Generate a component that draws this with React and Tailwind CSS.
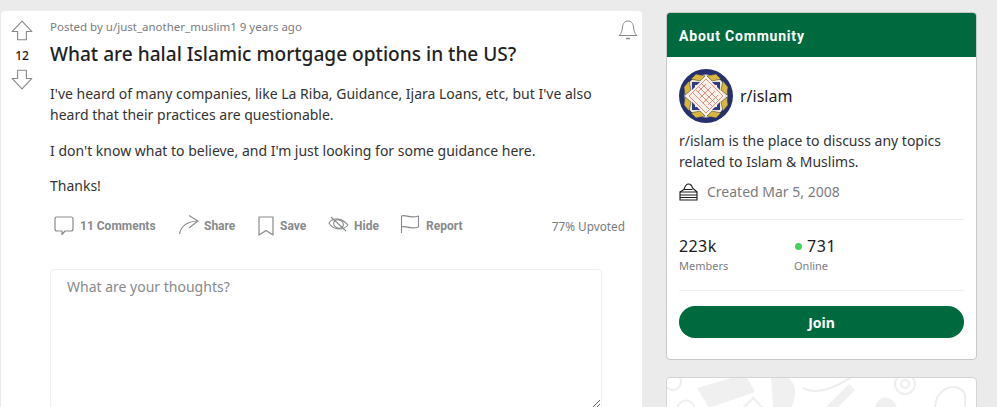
import React from 'react';

const plex = "font-['Roboto',sans-serif]";
const noto = "font-['Noto_Sans',sans-serif]";

const Arrow = ({ down }) => (
  <svg width="22" height="22" viewBox="0 0 20 20" fill="none" stroke="#878a8c" strokeWidth="1" className={down ? 'rotate-180' : ''}>
    <path d="M10 1 L19 10.5 H14 V18 H6 V10.5 H1 Z" strokeLinejoin="round" />
  </svg>
);

const actions = [
  {
    label: '11 Comments',
    gap: 'gap-[6px]',
    w: 'w-[124px]',
    icon: (
      <svg width="20" height="20" viewBox="0 0 20 20" fill="none" stroke="#878a8c" strokeWidth="1.2">
        <path d="M3 1 H17 Q19 1 19 3 V13 Q19 15 17 15 H11 L8 18.5 V15 H3 Q1 15 1 13 V3 Q1 1 3 1 Z" strokeLinejoin="round" />
      </svg>
    ),
  },
  {
    label: 'Share',
    gap: 'gap-[5px]',
    w: 'w-[80px]',
    icon: (
      <svg width="21" height="21" viewBox="0 0 21 21" fill="none" stroke="#878a8c" strokeWidth="1.1">
        <path d="M1.5 19 C3 11 10 6.5 19.5 6" />
        <path d="M11 0.5 L20 6 L11 13" />
      </svg>
    ),
  },
  {
    label: 'Save',
    gap: 'gap-[6px]',
    w: 'w-[70px]',
    icon: (
      <svg width="16" height="20" viewBox="0 0 16 20" fill="none" stroke="#878a8c" strokeWidth="1.2">
        <path d="M1 1 H15 V19 L8 14.5 L1 19 Z" strokeLinejoin="round" />
      </svg>
    ),
  },
  {
    label: 'Hide',
    gap: 'gap-[5px]',
    w: 'w-[72px]',
    icon: (
      <svg width="21" height="16" viewBox="0 0 21 16" fill="none" stroke="#878a8c" strokeWidth="1.1" className="-mt-[3px]">
        <path d="M1 7 C5 1 14 2 20 9 C15 15 5 14 1 7 Z" />
        <ellipse cx="10.5" cy="8" rx="5" ry="4" transform="rotate(20 10.5 8)" />
        <path d="M3 1 L18 15" />
      </svg>
    ),
  },
  {
    label: 'Report',
    gap: 'gap-[6px]',
    w: '',
    icon: (
      <svg width="20" height="20" viewBox="0 0 20 20" fill="none" stroke="#878a8c" strokeWidth="1.1" className="-mt-[3px]">
        <path d="M1.5 19 V2 C6 0 9 5 18.5 2 V13 C10 16 6 11 1.5 13" strokeLinejoin="round" />
      </svg>
    ),
  },
];

const Logo = () => (
  <svg width="54" height="54" viewBox="0 0 54 54" className="shrink-0">
    <circle cx="27" cy="27" r="27" fill="#27306f" />
    <circle cx="27" cy="27" r="21.5" fill="#efe9cf" />
    <rect x="13" y="13" width="28" height="28" fill="#2d3a86" />
    <rect x="16" y="16" width="22" height="22" fill="#e8ebf5" />
    <path d="M17 5 L26 7 L21 12 L12 10 Z M37 5 L28 7 L33 12 L42 10 Z M17 49 L26 47 L21 42 L12 44 Z M37 49 L28 47 L33 42 L42 44 Z" fill="#d8b740" stroke="#333" strokeWidth="0.5" />
    <path d="M5 18 L10 12 L12 21 L6 26 Z M49 18 L44 12 L42 21 L48 26 Z M5 36 L10 42 L12 33 L6 28 Z M49 36 L44 42 L42 33 L48 28 Z" fill="#d8b740" stroke="#333" strokeWidth="0.5" />
    <path d="M27 7 L47 27 L27 47 L7 27 Z" fill="#fbf1ea" />
    <g stroke="#cf7a66" strokeWidth="0.8" fill="none">
      <path d="M27 10 L44 27 L27 44 L10 27 Z" />
      <path d="M23 15 L39 31 M20 18 L36 34 M17 21 L33 37 M14 24 L30 40" />
      <path d="M27 15 L19 23 M32 18 L21 29 M36 22 L24 34 M39 26 L29 36" />
    </g>
  </svg>
);

const Doodles = () => (
  <svg width="309" height="30" viewBox="0 0 309 30" fill="none" className="block">
    <g fill="#f0f0f0">
      <path d="M30 10 L78 -4 L88 14 L42 30 Z" />
      <path d="M104 -2 H120 Q134 10 124 30 H106 Z" />
      <path d="M158 30 L182 6 L188 12 L170 30 Z" />
      <path d="M208 30 C210 16 226 16 230 30 Z" />
    </g>
    <g stroke="#eeeeee" strokeWidth="2">
      <circle cx="238" cy="6" r="10" />
      <circle cx="238" cy="6" r="4" />
      <path d="M268 30 C268 10 290 2 298 16 V30" />
      <circle cx="6" cy="4" r="8" />
      <path d="M136 10 C150 18 168 10 186 -2" />
      <path d="M76 30 L86 20 L96 30" />
      <path d="M10 30 C14 20 24 20 28 30" />
    </g>
  </svg>
);

export default function App() {
  return (
    <div className={`h-[407px] w-[997px] overflow-hidden bg-[#ebebeb] pt-[11px] flex items-start ${noto}`}>
      {/* Post */}
      <div className="ml-px h-[396px] w-[641px] shrink-0 rounded-t bg-white flex">
        <div className="w-[40px] shrink-0 pt-[9px] pl-[10px] flex flex-col items-start">
          <Arrow />
          <div className="w-[22px] mt-[6px] mb-[4px] text-center text-[12px] leading-[16px] font-medium text-[#1a1a1b]">12</div>
          <Arrow down />
        </div>
        <div className="flex-1 pl-[9px] min-w-0 flex flex-col">
          <div className="relative pt-[8px] text-[11.5px] leading-[16px] text-[#787c7e]">
            Posted by u/just_another_muslim1 9 years ago
            <svg width="20" height="21" viewBox="0 0 20 21" fill="none" stroke="#878a8c" strokeWidth="1" className="absolute right-[4px] top-[9px]">
              <path d="M1 15.5 C4 13 4 10 4.5 7 C5 3 7 1 10 1 C13 1 15 3 15.5 7 C16 10 16 13 19 15.5 Z" strokeLinejoin="round" />
              <path d="M8 18.5 H12" strokeWidth="1.5" />
            </svg>
          </div>
          <h1 className="mt-[7px] text-[19.1px] leading-[24px] font-medium text-[#222222]">
            What are halal Islamic mortgage options in the US?
          </h1>
          <div className="mt-[17px] w-[560px] text-[14px] leading-[21px] text-[#333333]">
            <p>I've heard of many companies, like La Riba, Guidance, Ijara Loans, etc, but I've also heard that their practices are questionable.</p>
            <p className="mt-[15px]">I don't know what to believe, and I'm just looking for some guidance here.</p>
            <p className="mt-[14px]">Thanks!</p>
          </div>
          <div className="mt-[19px] h-[24px] flex items-center pl-[4px] pr-[17px]">
            {actions.map((a) => (
              <div key={a.label} className={`flex items-center shrink-0 ${a.gap} ${a.w}`}>
                {a.icon}
                <span className={`text-[12px] leading-[16px] font-bold text-[#878a8c] ${plex}`}>{a.label}</span>
              </div>
            ))}
            <span className="ml-auto text-[11.8px] leading-[16px] text-[#787c7e]">77% Upvoted</span>
          </div>
          <textarea
            readOnly
            placeholder="What are your thoughts?"
            className="mt-[33px] h-[140px] w-[552px] shrink-0 rounded border border-[#edeff1] bg-white px-[16px] py-[6px] text-[14px] leading-[21px] text-[#1a1a1b] placeholder:text-[#878a8c] outline-none"
          />
        </div>
      </div>

      {/* Sidebar */}
      <div className="ml-[24px] mt-px w-[311px] shrink-0 flex flex-col gap-[17px]">
        <div className="h-[348px] rounded border border-[#c8c8c8] bg-white overflow-hidden">
          <div className={`h-[44px] bg-[#006a3f] px-[12px] pt-[2px] flex items-center text-[14px] font-bold tracking-[0.8px] text-white ${plex}`}>
            About Community
          </div>
          <div className="px-[12px] pt-[12px]">
            <div className="flex items-center gap-[7px]">
              <Logo />
              <span className="text-[16px] leading-[20px] text-[#1a1a1b]">r/islam</span>
            </div>
            <p className="mt-[7px] text-[14px] leading-[21px] text-[#333333]">
              r/islam is the place to discuss any topics related to Islam &amp; Muslims.
            </p>
            <div className="mt-[11px] flex items-center gap-[9px] text-[14px] leading-[18px] text-[#7c7c7c]">
              <svg width="19" height="18" viewBox="0 0 19 18" fill="none" stroke="#1a1a1b" strokeWidth="1.1">
                <path d="M1 9 L5 6.5 C6 3 7 1 9.5 1 C12 1 13 3 13.5 5 L18 9" />
                <path d="M5 6.5 H13.5" />
                <path d="M1 9 H18 V17 H1 Z M1 12 H18 M1 14.5 H18" />
              </svg>
              Created Mar 5, 2008
            </div>
            <div className="mt-[18px] border-t border-[#edeff1] pt-[16px] flex">
              <div className="w-[115px]">
                <div className="text-[16px] leading-[20px] tracking-[0.4px] text-[#1a1a1b]">223k</div>
                <div className="mt-[2px] text-[11px] leading-[16px] text-[#7c7c7c]">Members</div>
              </div>
              <div>
                <div className="flex items-center text-[16px] leading-[20px] tracking-[0.6px] text-[#1a1a1b]">
                  <span className="ml-[1px] mr-[5px] h-[7px] w-[7px] rounded-full bg-[#46d160]" />
                  731
                </div>
                <div className="mt-[2px] text-[11px] leading-[16px] text-[#7c7c7c]">Online</div>
              </div>
            </div>
            <div className="mt-[16px] border-t border-[#edeff1] pt-[15px]">
              <button className="h-[32px] w-full rounded-full bg-[#006a3f] text-[14px] font-bold text-white">Join</button>
            </div>
          </div>
        </div>
        <div className="h-[60px] rounded border border-[#d4d4d4] bg-white overflow-hidden">
          <Doodles />
        </div>
      </div>
    </div>
  );
}
